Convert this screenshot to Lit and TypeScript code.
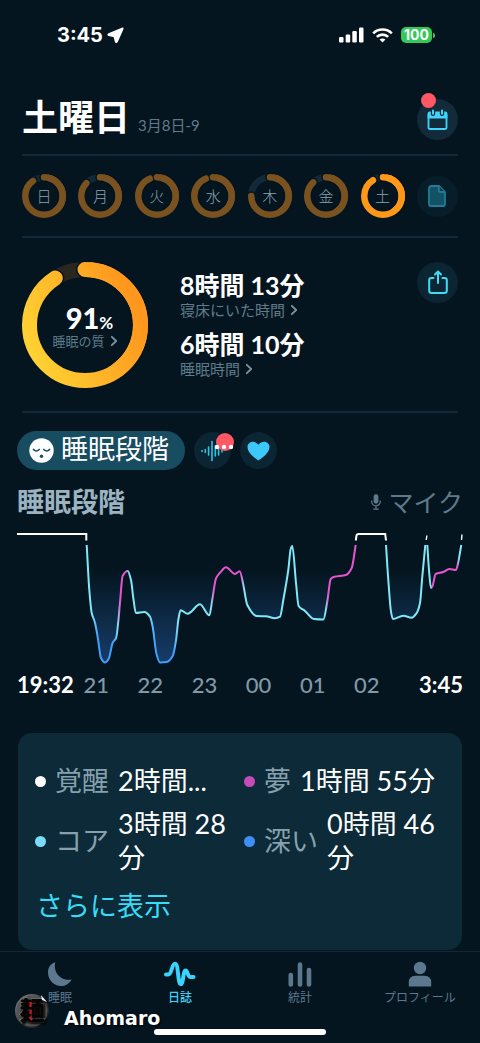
import { LitElement, html, svg, css } from "lit";
import { customElement, property, state } from "lit/decorators.js";
import { classMap } from "lit/directives/class-map.js";

type Point = [number, number];

const DAYS = [
  { label: "日", score: 90 },
  { label: "月", score: 87 },
  { label: "火", score: 94 },
  { label: "水", score: 94 },
  { label: "木", score: 75 },
  { label: "金", score: 88 },
  { label: "土", score: 91 },
];

const HOURS = ["21", "22", "23", "00", "01", "02"];

const STAGES = [
  { kind: "awake", label: "覚醒", value: "2時間..." },
  { kind: "dream", label: "夢", value: "1時間 55分" },
  { kind: "core", label: "コア", value: "3時間 28分" },
  { kind: "deep", label: "深い", value: "0時間 46分" },
];

const SLEEP_RUNS: Point[][] = [
  [
    [86.7, 545], [89.3, 590], [91.7, 613], [95, 622.7], [97.7, 637], [101, 658], [105, 662.5],
    [108.6, 659], [112.7, 642.7], [116, 638], [118.3, 621.7], [120, 603], [122.6, 576],
    [127.7, 571], [131, 580], [133.3, 598], [135.9, 613], [144.3, 612], [150, 616.7],
    [152.7, 626.7], [156.5, 654], [160, 662.4], [166.7, 662], [172.7, 656], [176, 640],
    [178.3, 620], [180.6, 610.3], [187.7, 613.7], [200, 604.3], [209.3, 615.3], [212.3, 600],
    [216, 578.3], [220, 572.7], [226, 567.3], [235, 574], [239.7, 571.2], [243.3, 585],
    [247.3, 605], [256.7, 616], [266, 616.3], [275, 618.3], [280, 616.7], [283.3, 600],
    [288.3, 570], [290.7, 549], [292.3, 546], [296, 583], [298.6, 606], [305, 611],
    [314, 619], [323.3, 619.5], [327.3, 601.7], [330.7, 579], [334.3, 576.7], [346, 575],
    [351.7, 568], [355.7, 545],
  ],
  [
    [386, 545], [388.3, 580], [391, 611.7], [392.9, 619], [403.3, 615.7], [411.7, 617.7],
    [416.7, 613], [420, 603], [422.3, 576.7], [425.3, 545],
  ],
  [
    [427.3, 545], [429, 570], [430.9, 588], [432.5, 586], [435.7, 574], [443.3, 572],
    [449.3, 569], [456, 570], [458.3, 561.7], [461.3, 545],
  ],
];

const COLOR_STOPS: [number, string][] = [
  [92, "#7fe9f7"], [98, "#429dfb"], [114, "#429dfb"], [118, "#7fe9f7"], [120, "#e854cf"],
  [126, "#e854cf"], [129, "#7fe9f7"], [149, "#7fe9f7"], [155, "#429dfb"], [174, "#429dfb"],
  [178, "#7fe9f7"], [211, "#7fe9f7"], [214, "#e854cf"], [241, "#e854cf"], [244, "#7fe9f7"],
  [326, "#7fe9f7"], [328, "#e854cf"], [357, "#e854cf"], [380, "#7fe9f7"], [431, "#7fe9f7"],
  [432, "#e854cf"], [457, "#e854cf"], [459, "#7fe9f7"],
];

/** Joins the points with cubic segments whose slopes never overshoot. */
function smooth(points: Point[]): string {
  const n = points.length;
  const d = points.slice(1).map((p, i) => (p[1] - points[i][1]) / (p[0] - points[i][0]));
  const m = points.map((_, i) => {
    if (i === 0) return d[0];
    if (i === n - 1) return d[n - 2];
    return d[i - 1] * d[i] <= 0 ? 0 : (2 * d[i - 1] * d[i]) / (d[i - 1] + d[i]);
  });
  let path = `M${points[0][0]} ${points[0][1]}`;
  for (let i = 0; i < n - 1; i++) {
    const [x0, y0] = points[i];
    const [x1, y1] = points[i + 1];
    const h = (x1 - x0) / 3;
    path += `C${(x0 + h).toFixed(1)} ${(y0 + h * m[i]).toFixed(1)} ${(x1 - h).toFixed(1)} ${(y1 - h * m[i + 1]).toFixed(1)} ${x1} ${y1}`;
  }
  return path;
}

const chevron = html`<svg class="chevron" viewBox="0 0 8 12" aria-hidden="true">
  <path d="M1.8 1.8 6.2 6 1.8 10.2" fill="none" stroke="currentColor" stroke-width="1.8" stroke-linecap="round" stroke-linejoin="round"/>
</svg>`;

@customElement("score-ring")
export class ScoreRing extends LitElement {
  @property({ type: Number }) score = 0;
  @property({ type: Number }) size = 44;
  @property({ type: Number }) thickness = 6;
  @property() tone = "dim";

  static styles = css`
    :host { display: block; position: relative; }
    svg { display: block; width: 100%; }
    .inner {
      position: absolute; inset: 0; display: flex; flex-direction: column;
      align-items: center; justify-content: center;
    }
  `;

  render() {
    const c = this.size / 2;
    const r = c - this.thickness / 2;
    const w = this.thickness;
    const paint = this.tone === "gold" ? "url(#gold)" : this.tone === "bright" ? "#ff9719" : "#7a5220";
    const track = this.tone === "gold" ? "#2b2620" : "#12293a";
    const bg = "#04151f";
    return html`<svg viewBox="0 0 ${this.size} ${this.size}" aria-hidden="true">
        <defs>
          <linearGradient id="gold" gradientUnits="userSpaceOnUse" x1=${this.size * 0.8} y1=${this.size * 0.85} x2=${this.size * 0.45} y2="0">
            <stop offset="0" stop-color="#ff961d" />
            <stop offset="1" stop-color="#ffd233" />
          </linearGradient>
        </defs>
        <g fill="none" stroke-linecap="round" transform="rotate(-90 ${c} ${c})">
          <circle cx=${c} cy=${c} r=${r} stroke=${track} stroke-width=${w} />
          <circle cx=${c} cy=${c} r=${r} stroke=${bg} stroke-width=${w + 3} pathLength="100" stroke-dasharray="${this.score} 100" />
          <circle cx=${c} cy=${c} r=${r} stroke=${paint} stroke-width=${w} pathLength="100" stroke-dasharray="${this.score} 100" />
          <circle cx=${c + r} cy=${c} r=${w / 2 + 1} fill=${bg} />
          <circle cx=${c} cy=${c} r=${r} stroke=${paint} stroke-width=${w} pathLength="100" stroke-dasharray="40 100" />
        </g>
      </svg>
      <div class="inner"><slot></slot></div>`;
  }
}

@customElement("sleep-chart")
export class SleepChart extends LitElement {
  static styles = css`
    :host { display: block; }
    svg { display: block; width: 100%; }
  `;

  render() {
    return html`<svg viewBox="17 525 446 142" role="img" aria-label="睡眠段階">
      <defs>
        <linearGradient id="stage" gradientUnits="userSpaceOnUse" x1="17" y1="0" x2="463" y2="0">
          ${COLOR_STOPS.map(([x, color]) => svg`<stop offset=${(x - 17) / 446} stop-color=${color} />`)}
        </linearGradient>
        <linearGradient id="depth" gradientUnits="userSpaceOnUse" x1="0" y1="570" x2="0" y2="664">
          <stop offset="0" stop-color="#1a4478" stop-opacity="0" />
          <stop offset="1" stop-color="#1a4478" stop-opacity="0.85" />
        </linearGradient>
      </defs>
      ${SLEEP_RUNS.map((run) => {
        const line = smooth(run);
        return svg`<path d="${line}Z" fill="url(#depth)" />
          <path d=${line} fill="none" stroke="url(#stage)" stroke-width="2" stroke-linejoin="round" />`;
      })}
      <g fill="none" stroke="#fff" stroke-width="2">
        <path d="M17 534H86.3V540.5" />
        <path d="M355.8 540.5 356.4 536Q356.8 534 358.5 534H385.2L386 540.5" />
        <path d="M426.2 540 426.9 535.5" stroke-width="1.4" />
        <path d="M461.5 540 462 534.5" stroke-width="1.4" />
      </g>
    </svg>`;
  }
}

@customElement("app-root")
export class AppRoot extends LitElement {
  @state() private day = 6;
  @state() private tab = 1;

  static styles = css`
    :host {
      display: flex; flex-direction: column; position: relative; min-height: 100vh;
      background: #04151f; color: #fff;
      font-family: Lato, "Noto Sans CJK JP", sans-serif;
    }
    * { box-sizing: border-box; }
    button, a {
      font: inherit; color: inherit; background: none; border: 0; padding: 0; margin: 0;
      text-decoration: none; cursor: pointer;
    }
    svg { display: block; flex: none; }
    h1, h2, p, dl, dd, dt { margin: 0; font-weight: inherit; }

    .status {
      display: flex; justify-content: space-between; align-items: center;
      height: 70px; padding: 0 45px 0 57px;
      font-family: Inter, sans-serif; font-weight: 700; font-size: 20px;
    }
    .cluster { display: flex; align-items: center; gap: 4px; }
    .cluster.right { gap: 8px; }
    .battery { display: flex; align-items: center; gap: 1px; }
    .level {
      width: 31px; height: 16px; border-radius: 5px; background: #34c759;
      font-size: 14px; line-height: 16px; text-align: center;
    }
    .nub { width: 2px; height: 5px; border-radius: 0 2px 2px 0; background: #34c759; }

    .top { padding: 0 22px; }
    .header {
      display: flex; justify-content: space-between; align-items: center;
      padding: 29px 0 14px; border-bottom: 2px solid #12293a;
    }
    .heading { display: flex; align-items: baseline; gap: 8px; padding-bottom: 6px; }
    .heading h1 { font-size: 36px; line-height: 34px; font-weight: 700; }
    .heading p { font-size: 15px; line-height: 16px; color: #5f7b8b; }
    .round {
      position: relative; display: flex; align-items: center; justify-content: center;
      width: 41px; height: 41px; border-radius: 50%; background: #0c2532; flex: none;
    }
    .round.cal { background: #132a3b; }
    .round.note { background: #071d29; }
    .badge {
      position: absolute; left: 4px; top: -6px; width: 15px; height: 15px;
      border-radius: 50%; background: #ff5864;
    }

    .week {
      display: flex; justify-content: space-between; align-items: center;
      padding: 18px 0; border-bottom: 2px solid #12293a;
    }
    .day { width: 44px; font-size: 15px; line-height: 20px; font-weight: 300; color: #8ba3b1; }

    .summary {
      display: flex; align-items: flex-start; padding: 24px 0 23px;
      border-bottom: 2px solid #12293a;
    }
    .quality { width: 126px; flex: none; }
    .score {
      display: flex; align-items: baseline; padding: 7px 0 0 9px;
      font-family: Lato, sans-serif; font-weight: 900; font-size: 29px; line-height: 20px;
    }
    .score small { font-size: 17px; font-weight: 700; }
    .caption {
      display: flex; align-items: center; gap: 5px; white-space: nowrap;
      font-size: 15px; line-height: 20px; color: #5f7b8b;
    }
    .quality .caption { font-size: 13px; line-height: 16px; }
    .chevron { width: 8px; height: 12px; color: #7d95a3; }
    .stats { flex: 1; display: grid; gap: 9px; padding: 8px 0 0 32px; }
    .figure { font-size: 25px; line-height: 30px; font-weight: 700; white-space: nowrap; }

    .stages { padding: 18px 17px 0; }
    .chips { display: flex; align-items: center; gap: 9px; }
    .pill {
      display: flex; align-items: center; gap: 7px; height: 39px; padding: 0 16px 0 12px;
      border-radius: 20px; background: #184c61; font-size: 27px; line-height: 36px;
    }
    .pill span { padding-bottom: 3px; }
    .chip { width: 37px; height: 37px; }
    .chip .badge { left: 22px; top: 1px; width: 18px; height: 18px; }
    .dots { position: absolute; left: 20px; top: 12px; }
    .titlebar {
      display: flex; justify-content: space-between; align-items: center;
      margin: 14px 0 5px; font-size: 27px; line-height: 36px;
    }
    .titlebar h2 { font-size: 27px; font-weight: 700; color: #9bb3c0; }
    .mic { display: flex; align-items: center; gap: 7px; color: #5f7b8b; font-size: 25px; }
    .axis {
      display: grid; grid-template-columns: 52fr repeat(6, 54fr) 69fr;
      margin-top: 3px; font-size: 22px; line-height: 30px; font-weight: 500;
      text-align: center; color: #8099a7; white-space: nowrap;
    }
    .axis > * { min-width: 0; }
    .axis .from { color: #fff; text-align: left; font-weight: 700; }
    .axis .to { color: #fff; display: flex; justify-content: flex-end; font-weight: 700; }

    .card {
      margin: 33px 18px 0; padding: 31px 17px 27px; border-radius: 14px; background: #0c2a37;
      font-size: 27px; line-height: 34px;
    }
    .legend { display: grid; grid-template-columns: minmax(0, 1fr) minmax(0, 1fr); gap: 9px 8px; }
    .entry { display: flex; align-items: center; gap: 9px; }
    .entry dt { display: flex; align-items: center; gap: 9px; flex: none; color: #86a0ad; }
    .dot { width: 11px; height: 11px; border-radius: 50%; }
    .dot.awake { background: #fff; }
    .dot.dream { background: #c64bb8; }
    .dot.core { background: #78dcfa; }
    .dot.deep { background: #3f8ffa; }
    .more { display: inline-block; margin: 14px 0 0 1px; color: #39dcf8; }

    .tabs {
      flex: 1; display: grid; grid-template-columns: repeat(4, 1fr); align-items: start;
      margin-top: 1px; padding: 9px 0 37px; border-top: 1px solid #12283a;
    }
    .tab {
      display: flex; flex-direction: column; align-items: center; gap: 3px;
      font-size: 12px; line-height: 16px; color: #5c788e;
    }
    .tab.on { color: #39d3fb; font-weight: 500; }

    .credit {
      position: absolute; left: 15px; bottom: 13px; display: flex; align-items: center; gap: 14px;
      font-family: "DejaVu Sans", sans-serif; font-weight: 700; font-size: 19px; line-height: 24px;
      text-shadow: 1px 1px 2px #000;
    }
    .credit span { padding-top: 15px; }
    .home {
      position: absolute; left: 32%; right: 32%; bottom: 8px; height: 6px;
      border-radius: 3px; background: #fff;
    }
  `;

  private tabs = [
    { label: "睡眠", icon: svg`<path d="M8.2 1.2C2.8 3 .8 7.300 1 12 1.400 19.400 7 25 14 25c4.600 0 8.600-2.600 10.600-6.600-1.800.5-4 .5-6 0C11 17 6.400 9.500 8.200 1.200Z" fill="currentColor"/>` },
    { label: "日誌", icon: svg`<path d="M-1 13.500H1.200C5 13.500 4.500 2.800 8 2.800 11.800 2.800 10.500 23 13.800 23 16.600 23 16 9.500 18.600 9.500 20.800 9.500 20.500 16 23.500 16H26.500" fill="none" stroke="currentColor" stroke-width="4" stroke-linecap="round" stroke-linejoin="round"/>` },
    { label: "統計", icon: svg`<path d="M3.800 14v9.500M13 3.500v20M22 9v14.500" fill="none" stroke="currentColor" stroke-width="4.600" stroke-linecap="round"/>` },
    { label: "プロフィール", icon: svg`<circle cx="13" cy="7" r="6.200" fill="currentColor"/><path d="M1.800 25.500V21.500Q1.800 14.800 8.500 14.800H17.500Q24.200 14.800 24.200 21.500V25.500Z" fill="currentColor"/>` },
  ];

  render() {
    return html`
      <div class="status">
        <div class="cluster">
          <span>3:45</span>
          <svg width="17" height="17" viewBox="0 0 17 17"><path d="M1.500 6.300 14.800.8Q17 0 16.400 2.200L10.800 15Q9 17.400 7.800 14.800L6.800 10.600Q6.700 10.200 6.200 10.100L1.600 8.900Q-.8 7.800 1.500 6.300Z" fill="#fff"/></svg>
        </div>
        <div class="cluster right">
          <svg width="25" height="16" viewBox="0 0 25 16" fill="#fff"><rect y="10" width="4.500" height="5.500" rx="1.200"/><rect x="6.700" y="7.500" width="4.500" height="8" rx="1.200"/><rect x="13.300" y="4" width="4.500" height="11.500" rx="1.200"/><rect x="20" y=".5" width="4.500" height="15" rx="1.200"/></svg>
          <svg width="21" height="15" viewBox="0 0 21 15" fill="none" stroke="#fff" stroke-width="2.600"><path d="M1.200 5.300A13.200 13.200 0 0 1 19.800 5.300"/><path d="M4.800 8.900A8.200 8.200 0 0 1 16.200 8.900"/><path d="M10.500 10.400a4.300 4.300 0 0 0-2.900 1.200l2.900 3 2.900-3a4.300 4.300 0 0 0-2.900-1.200Z" fill="#fff" stroke="none"/></svg>
          <div class="battery"><div class="level">100</div><div class="nub"></div></div>
        </div>
      </div>

      <section class="top">
        <header class="header">
          <div class="heading"><h1>土曜日</h1><p>3月8日-9</p></div>
          <button class="round cal" aria-label="カレンダー">
            <svg width="21" height="22" viewBox="0 0 21 22"><path d="M1.500 6.500H19.500V18.500Q19.500 20 18 20H3Q1.500 20 1.500 18.500Z" fill="none" stroke="#3fd4fb" stroke-width="1.800"/><path d="M.6 9.500V4.500Q.6 2.500 2.600 2.500H18.400Q20.400 2.500 20.400 4.500V9.500Z" fill="#3fd4fb"/><path d="M6 1.500V4.800M15 1.500V4.800" stroke="#132a3b" stroke-width="4.400" stroke-linecap="round"/><path d="M6 1.500V4.800M15 1.500V4.800" stroke="#3fd4fb" stroke-width="2" stroke-linecap="round"/></svg>
            <span class="badge"></span>
          </button>
        </header>

        <nav class="week">
          ${DAYS.map((d, i) => html`<button class="day" @click=${() => (this.day = i)}>
            <score-ring .score=${d.score} .size=${44} .thickness=${6.5} tone=${i === this.day ? "bright" : "dim"}>${d.label}</score-ring>
          </button>`)}
          <button class="round note" aria-label="メモ">
            <svg width="18" height="22" viewBox="0 0 18 22"><path d="M3.500 1H11L17 7V19Q17 21 15 21H3Q1 21 1 19V3.500Q1 1 3.500 1Z" fill="#135164" stroke="#217c97" stroke-width="1.800"/><path d="M10.800 1.200V5.500Q10.800 7 12.300 7H16.800" fill="#0c3444" stroke="#217c97" stroke-width="1.800"/></svg>
          </button>
        </nav>

        <div class="summary">
          <button class="quality">
            <score-ring .score=${91} .size=${126} .thickness=${15} tone="gold">
              <span class="score">91<small>%</small></span>
              <span class="caption">睡眠の質 ${chevron}</span>
            </score-ring>
          </button>
          <div class="stats">
            <div><div class="figure">8時間 13分</div><a class="caption" href="#bed">寝床にいた時間 ${chevron}</a></div>
            <div><div class="figure">6時間 10分</div><a class="caption" href="#asleep">睡眠時間 ${chevron}</a></div>
          </div>
          <button class="round" aria-label="共有">
            <svg width="20" height="25" viewBox="0 0 20 25" fill="none" stroke="#3fdcf8" stroke-width="2" stroke-linecap="round" stroke-linejoin="round"><path d="M5.500 8H3.500Q1.200 8 1.200 10.300V20.500Q1.200 23 3.700 23H16.300Q18.800 23 18.800 20.500V10.300Q18.800 8 16.500 8H14.500"/><path d="M10 13V2.500M7 4.500 10 1.500 13 4.500"/></svg>
          </button>
        </div>
      </section>

      <section class="stages">
        <div class="chips">
          <button class="pill">
            <svg width="25" height="25" viewBox="0 0 25 25"><circle cx="12.500" cy="12.500" r="12.200" fill="#fff"/><path d="M4.500 11.500Q7.200 14.500 10.200 11.500M14.800 11.500Q17.800 14.500 20.500 11.500" fill="none" stroke="#184c61" stroke-width="1.700" stroke-linecap="round"/><circle cx="12.500" cy="18.200" r="1.700" fill="#184c61"/></svg>
            <span>睡眠段階</span>
          </button>
          <button class="round chip" aria-label="音">
            <svg width="23" height="22" viewBox="0 0 23 22" fill="none" stroke="#2ec4e4" stroke-width="1.600" stroke-linecap="round"><path d="M1 10.500V11.500M4.300 9.500V12.500M7.600 7V15M11 1.500V20.500M14.300 6V16M17.600 8.500V15M21 10V12"/></svg>
            <span class="badge"></span>
            <svg class="dots" width="20" height="6" viewBox="0 0 20 6" fill="#fff"><circle cx="3" cy="3" r="2.200"/><circle cx="10" cy="3" r="2.200"/><circle cx="17" cy="3" r="2.200"/></svg>
          </button>
          <button class="round chip" aria-label="心拍">
            <svg width="23" height="20" viewBox="0 0 23 20"><path d="M11.500 19.500C9 17.500.5 12.500.5 6 .5 1 7.500-1.500 11.500 3.800 15.500-1.500 22.500 1 22.500 6 22.500 12.500 14 17.500 11.500 19.500Z" fill="#3cc8fb"/></svg>
          </button>
        </div>

        <div class="titlebar">
          <h2>睡眠段階</h2>
          <button class="mic">
            <svg width="10" height="16" viewBox="0 0 10 16"><rect x="2.600" y=".3" width="4.800" height="9.400" rx="2.400" fill="currentColor"/><path d="M.7 6.500V7.500A4.300 4.300 0 0 0 9.300 7.500V6.500M5 12V15M2.300 15.200H7.700" fill="none" stroke="currentColor" stroke-width="1.200"/></svg>
            マイク
          </button>
        </div>
        <sleep-chart></sleep-chart>
        <div class="axis">
          <span class="from">19:32</span>
          ${HOURS.map((h) => html`<span>${h}</span>`)}
          <span class="to">3:45</span>
        </div>
      </section>

      <section class="card">
        <dl class="legend">
          ${STAGES.map((s) => html`<div class="entry">
            <dt><span class="dot ${s.kind}"></span>${s.label}</dt>
            <dd>${s.value}</dd>
          </div>`)}
        </dl>
        <a class="more" href="#more">さらに表示</a>
      </section>

      <nav class="tabs">
        ${this.tabs.map((t, i) => html`<button class=${classMap({ tab: true, on: i === this.tab })} @click=${() => (this.tab = i)}>
          <svg width="30" height="26" viewBox="-2 0 30 26" overflow="visible">${t.icon}</svg>
          ${t.label}
        </button>`)}
      </nav>

      <div class="home"></div>
      <div class="credit">
        <svg width="35" height="38" viewBox="0 0 35 38">
          <defs><linearGradient id="coin" x1="0" y1="0" x2="1" y2="1"><stop offset="0" stop-color="#8a8a8a"/><stop offset=".5" stop-color="#3c3c3c"/><stop offset="1" stop-color="#0a0a0a"/></linearGradient></defs>
          <circle cx="17" cy="19" r="17" fill="url(#coin)"/>
          <circle cx="17" cy="19" r="15.500" fill="#555"/>
          <text x="17" y="28" text-anchor="middle" font-family="Noto Sans CJK JP, sans-serif" font-size="25" font-weight="900" fill="#050505" stroke="#8d8d8d" stroke-width="1.200" paint-order="stroke">麺</text>
          <path d="M15.500 10V15M15.500 18V22M14.500 25 17 28" stroke="#d8142a" stroke-width="2" fill="none"/>
          <path d="M26 3 32 10 27 8Z" fill="#eee"/>
        </svg>
        <span>Ahomaro</span>
      </div>
    `;
  }
}
